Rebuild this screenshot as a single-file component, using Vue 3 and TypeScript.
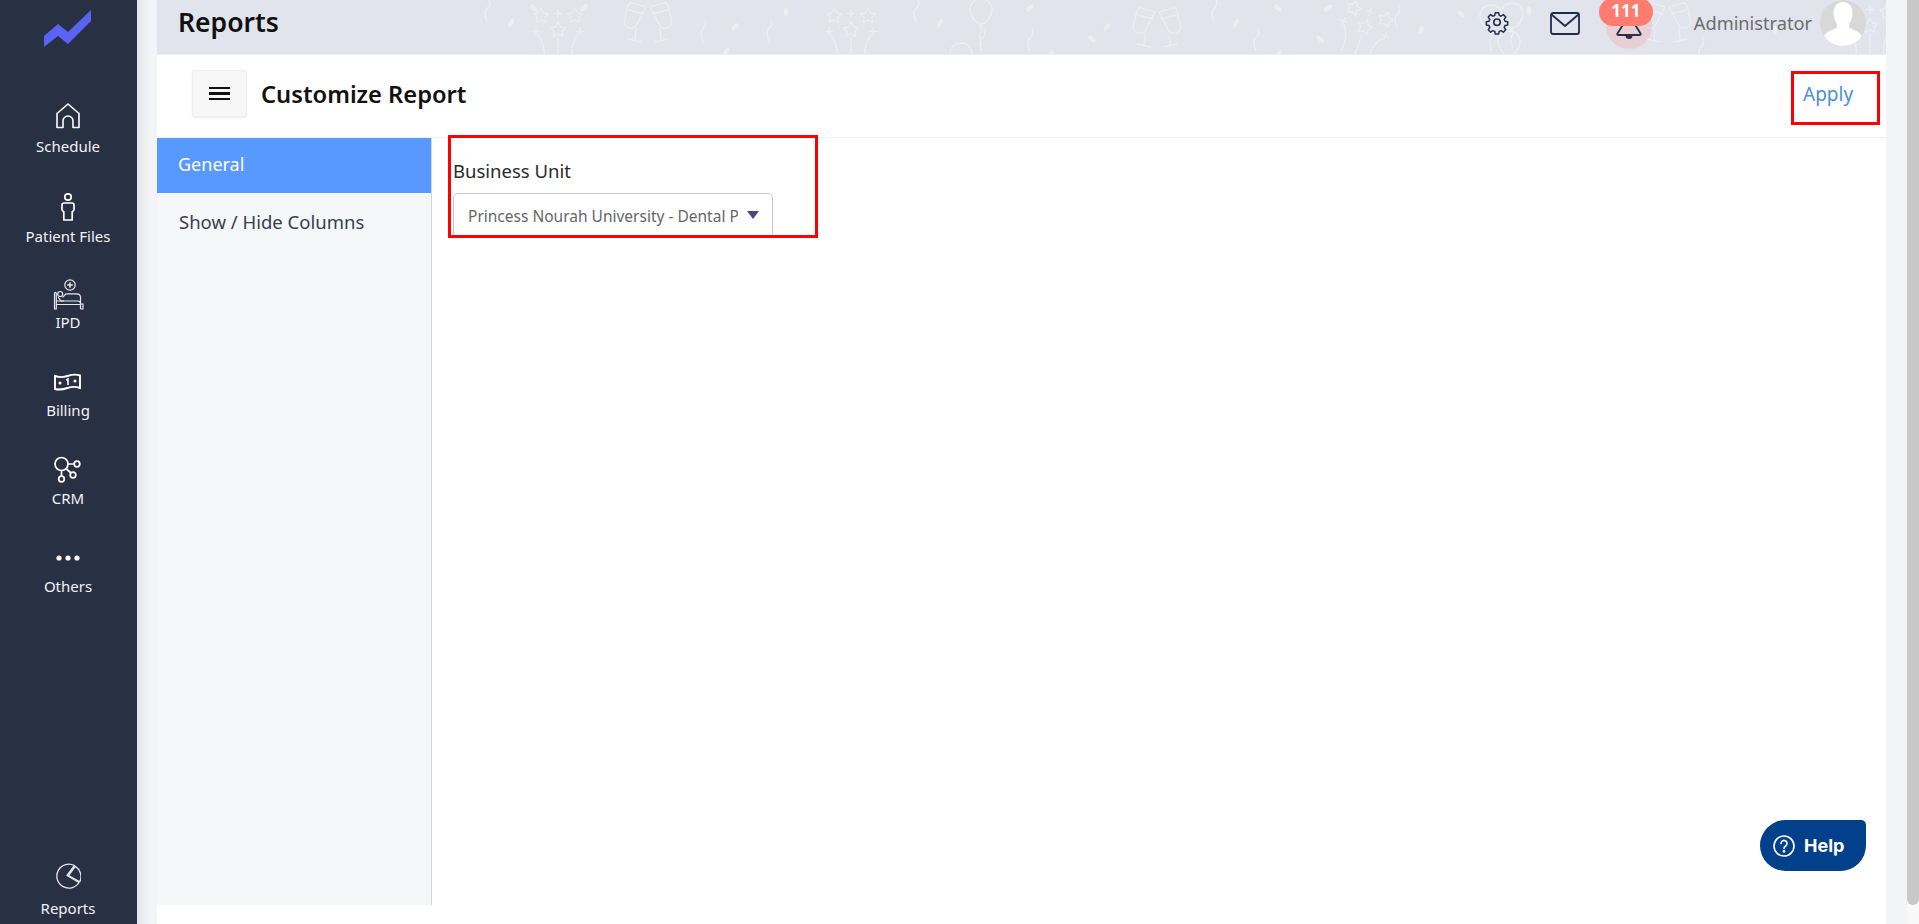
<script setup lang="ts">
const leaves: [number, number, number][] = [
  [534, 8, -45], [584, 8, 45], [511, 23, 30], [735, 27, 45], [726, 52, 30], [786, 12, 0], [940, 23, 25],
  [1030, 8, 50], [1107, 27, 45], [1092, 39, -45], [1051, 54, 20], [1236, 23, 25], [1278, 8, -45],
  [1320, 39, -50], [1328, 8, 50], [1279, 54, 25], [1421, 30, 20], [1461, 14, -45], [1529, 11, 0], [1640, 14, 40], [1775, 30, 0]
]
const squiggles: [number, number][] = [[486, 0], [702, 20], [768, 20], [915, 0], [1029, 29], [1213, 0], [1255, 29], [1396, 6], [981, 30], [1700, 38]]
const glasses: [number, number][] = [[648, 27], [1157, 32], [1667, 27]]
const stars: [number, number, number][] = [[558, 32, 0], [851, 32, 0], [1364, 29, 20], [1870, 28, 0]]
const balloons: [number, number][] = [[981, 12], [961, 56], [1491, 18], [1509, 44], [1512, 16]]
</script>

<template>
  <div class="page">
    <aside class="sidebar">
      <svg class="logo" width="47" height="37" viewBox="44 10 47 37"><polygon points="44,36 58,24 68,32 91,10 91,21 68,44 58,36 44,47" fill="#5b62f5" /></svg>
      <nav class="nav">
        <a class="item schedule">
          <svg width="24" height="26" viewBox="0 0 24 26" fill="none" stroke="#fff" stroke-width="1.6" stroke-linejoin="round"><path d="M1 24.5V10.5L12 1l11 9.500V24.500h-6V18a5 5 0 0 0-10 0v6.500z" /></svg>
          <span>Schedule</span>
        </a>
        <a class="item patient">
          <svg width="14" height="28" viewBox="0 0 14 28" fill="none" stroke="#fff" stroke-width="1.700"><circle cx="7" cy="4" r="3.200" /><path d="M3 10h8c1.300 0 2 .8 2 2v4.500c0 1-.5 1.500-1.800 2.200V27H2.800v-8.300C1.500 18 1 17.500 1 16.500V12c0-1.200.7-2 2-2z" /></svg>
          <span>Patient Files</span>
        </a>
        <a class="item ipd">
          <svg width="31" height="31" viewBox="0 0 31 31" fill="none" stroke="#e8e9ec" stroke-width="1.200"><circle cx="17" cy="6" r="5.200" /><path d="M17 3.200v5.600M14.200 6h5.600" stroke-width="1.500" /><path d="M1.500 30V14.500c0-1.500 1.800-1.500 1.800 0V30zM3.500 22h21c1.500 0 3 1 3 2.500V30M3.500 25.500h24M27.500 24V18.500c0-2.500-1.500-3.700-4-3.700H13l-3.500 3.500" /><circle cx="7.200" cy="15" r="2.500" /><path d="M5 18l3 4h3" /><path d="M27.500 30h2.500v-5h-2.500" /></svg>
          <span>IPD</span>
        </a>
        <a class="item billing">
          <svg width="27" height="18" viewBox="0 0 27 18" fill="none" stroke="#fff" stroke-width="1.900"><path d="M1 3c5 1.800 8 1.500 12.500 0S22 1 26 2.500V15c-5-1.800-8-1.500-12.500 0S5 17 1 16z" /><path d="M12 7l2-1v6" stroke-width="1.600" /><circle cx="6" cy="10" r=".6" /><circle cx="21" cy="8" r=".6" /></svg>
          <span>Billing</span>
        </a>
        <a class="item crm">
          <svg width="27" height="27" viewBox="0 0 27 27" fill="none" stroke="#fff" stroke-width="1.700"><circle cx="7.500" cy="8" r="6.500" /><circle cx="23" cy="8" r="2.800" /><circle cx="19" cy="19" r="2.800" /><circle cx="7.500" cy="23" r="2.800" /><path d="M14 8h6M12.500 13l4.500 4M7.500 14.500V20" /></svg>
          <span>CRM</span>
        </a>
        <a class="item others">
          <svg width="24" height="6" viewBox="0 0 24 6" fill="#fff"><circle cx="3" cy="3" r="2.600" /><circle cx="12" cy="3" r="2.600" /><circle cx="21" cy="3" r="2.600" /></svg>
          <span>Others</span>
        </a>
        <a class="item reports">
          <svg width="26" height="26" viewBox="0 0 26 26" fill="none" stroke="#e8e9ec" stroke-width="1.300" stroke-linejoin="round"><path d="M19.500 2.500A12 12 0 1 0 24 19.500L12 12.500z" /><path d="M20.300 3.400a12 12 0 0 1 4.500 15.300L13.500 12.500z" /></svg>
          <span>Reports</span>
        </a>
      </nav>
    </aside>

    <div class="gutter-left"></div>

    <main class="main">
      <header class="topbar">
        <svg class="confetti" width="1729" height="54" viewBox="157 0 1729 54" fill="none" stroke="#eceef4" stroke-width="1.300" stroke-linecap="round" stroke-linejoin="round">
          <defs>
            <g id="glass-pair">
              <path d="M-2-20l-14-4c-3-.5-3.500 1-4 3l-3.500 14c-1 5 1.500 7 5 8 4 1 6.500-.5 8-5z" />
              <path d="M2-20l14-4c3-.5 3.500 1 4 3l3.500 14c1 5-1.500 7-5 8-4 1-6.500-.5-8-5z" />
              <path d="M-19-17l15 4M19-17l-15 4M-12 2l-1 11M12 2l1 11M-20 12l13 3M20 12l-13 3" />
            </g>
            <g id="star-burst">
              <path id="one-star" d="M-17-24l2.500 5 5 .8-3.600 3.500 .8 5-4.700-2.400-4.700 2.400 .8-5-3.600-3.500 5-.8z" />
              <use href="#one-star" x="34" />
              <use href="#one-star" x="17" y="14" />
              <path d="M0-22v7M-3.500-18.500h7M-22-4v7M-25.500-.5h7M22-4v7M18.500-.5h7M-20 3c6 8 7 15 6 24M20 3c-6 8-7 15-6 24M0 6v20" />
            </g>
            <path id="squiggle" d="M3 0c2 4 0 7-2.500 9C-2 12 -1 16 1 22" />
            <path id="balloon" d="M0-13c7 0 11 5 11 11S5 12 0 12-11 4-11-2s4-11 11-11zM0 12l-1 3 2 0zM0 15c3 4-3 7-1 11 1 3 2 5 1 8" />
          </defs>
          <ellipse v-for="(l, i) in leaves" :key="'l' + i" :cx="l[0]" :cy="l[1]" rx="2.200" ry="4.500" :transform="`rotate(${l[2]} ${l[0]} ${l[1]})`" fill="#eceef4" stroke="none" />
          <use v-for="(s, i) in squiggles" :key="'s' + i" href="#squiggle" :x="s[0]" :y="s[1]" />
          <use v-for="(g, i) in glasses" :key="'g' + i" href="#glass-pair" :x="g[0]" :y="g[1]" />
          <g v-for="(s, i) in stars" :key="'t' + i" :transform="`translate(${s[0]} ${s[1]}) rotate(${s[2]})`"><use href="#star-burst" /></g>
          <use v-for="(b, i) in balloons" :key="'b' + i" href="#balloon" :x="b[0]" :y="b[1]" />
        </svg>
        <h1 class="page-title">Reports</h1>
        <div class="top-actions">
          <svg class="gear" width="26" height="26" viewBox="0 0 24 24" fill="none" stroke="#27304a" stroke-width="1.500" stroke-linejoin="round"><path d="M10.300 2.500h3.400l.5 2.700 1.900.8 2.300-1.600 2.400 2.400-1.600 2.300.8 1.900 2.700.5v3.400l-2.700.5-.8 1.900 1.600 2.300-2.400 2.400-2.300-1.600-1.900.8-.5 2.700h-3.400l-.5-2.700-1.900-.8-2.300 1.600-2.400-2.400 1.600-2.300-.8-1.900-2.700-.5v-3.400l2.700-.5.8-1.900-1.600-2.300 2.400-2.400 2.300 1.600 1.900-.8z" transform="translate(12 12) scale(.92) translate(-12 -12.800)" /><circle cx="12" cy="11.300" r="3" /></svg>
          <svg class="mail" width="30" height="23" viewBox="0 0 30 23" fill="none" stroke="#1f2d4d" stroke-width="1.800" stroke-linejoin="round"><rect x="1" y="1" width="28" height="21" rx="2" /><path d="M1.500 2.500L15 14 28.500 2.500" /></svg>
          <div class="bell">
            <svg class="bell-icon" width="26" height="18" viewBox="0 0 26 18"><path d="M8 0L1.500 10.500c-.5 1 0 1.500 1 1.500h21c1 0 1.500-.5 1-1.500L18 0" fill="none" stroke="#2c2f4c" stroke-width="1.800" /><path d="M9.500 12.500a3.500 3.500 0 0 0 7 0z" fill="#2c2f4c" /></svg>
            <span class="badge">111</span>
          </div>
          <span class="user">Administrator</span>
          <div class="avatar">
            <svg width="46" height="46" viewBox="0 0 46 46"><path fill="#fff" d="M23 2c6.500 0 9.500 5 9.500 11 0 4-1.200 7.500-3 10-.8 1.500-.8 4 .8 5.200 3 1.800 9 3.300 11 6.800 1 2 1 5 .7 11H4c-.3-6-.3-9 .7-11 2-3.500 8-5 11-6.800 1.600-1.200 1.600-3.700.8-5.200-1.800-2.500-3-6-3-10 0-6 3-11 9.500-11z" /></svg>
          </div>
        </div>
      </header>

      <section class="toolbar">
        <button class="menu-btn" type="button" aria-label="menu"><span></span><span></span><span></span></button>
        <h2 class="sub-title">Customize Report</h2>
        <div class="apply-box"><a class="apply">Apply</a></div>
      </section>

      <section class="content">
        <aside class="tabs">
          <a class="tab active">General</a>
          <a class="tab columns">Show / Hide Columns</a>
        </aside>
        <div class="form">
          <label class="field-label">Business Unit</label>
          <div class="select">
            <span class="select-text">Princess Nourah University - Dental Polyclinic</span>
            <i class="caret"></i>
          </div>
          <div class="highlight"></div>
        </div>
      </section>

      <button class="help" type="button">
        <svg width="22" height="22" viewBox="0 0 22 22" fill="none" stroke="#fff" stroke-width="1.600"><circle cx="11" cy="11" r="10" /><path d="M8 8.500a3 3 0 1 1 4.600 2.500c-1 .7-1.600 1.200-1.600 2.500" stroke-linecap="round" /><circle cx="11" cy="16.300" r=".6" fill="#fff" /></svg>
        <span>Help</span>
      </button>
    </main>

    <div class="gutter-right"></div>
    <div class="scrollbar"><div class="thumb"></div></div>
  </div>
</template>

<style scoped>
.page { display: flex; height: 924px; overflow: hidden; background: #fff; font-family: "Noto Sans", "Open Sans", sans-serif; }
.sidebar { width: 137px; flex: none; background: #283044; display: flex; flex-direction: column; }
.logo { display: block; margin: 10px 0 0 44px; flex: none; }
.nav { flex: 1; display: flex; flex-direction: column; align-items: center; padding-right: 1px; color: #f2f3f5; font-size: 15px; line-height: 20px; }
.item { display: flex; flex-direction: column; align-items: center; }
.item svg { display: block; }
.item span { margin: -1px 0 1px; }
.schedule { margin-top: 56px; }
.schedule svg { margin-bottom: 8px; }
.patient { margin-top: 36px; }
.patient svg { margin-bottom: 6px; }
.ipd { margin-top: 32px; }
.ipd svg { margin-bottom: 3px; }
.billing { margin-top: 40px; }
.billing svg { margin-bottom: 10px; }
.crm { margin-top: 35px; }
.crm svg { margin-bottom: 6px; }
.others { margin-top: 46px; }
.others svg { margin-bottom: 16px; }
.reports { margin-top: auto; margin-bottom: 5px; }
.reports svg { margin-bottom: 10px; }
.gutter-left { width: 20px; flex: none; background: linear-gradient(90deg, #e4e5e9, #f3f4f7 65%); }
.main { width: 1729px; flex: none; position: relative; display: flex; flex-direction: column; }
.topbar { height: 54px; flex: none; position: relative; background: #e1e4ed; display: flex; align-items: center; padding-left: 21px; border-bottom: 1px solid #eceef3; overflow: hidden; }
.confetti { position: absolute; left: 0; top: 0; }
.page-title { position: relative; margin: 0 0 10px; font-size: 26.500px; font-weight: 600; color: #111; line-height: 46px; }
.top-actions { position: relative; margin-left: auto; display: flex; align-items: center; height: 54px; }
.gear { margin-right: 40px; margin-bottom: 9px; }
.mail { margin-right: 26px; margin-bottom: 8px; }
.bell { position: relative; width: 46px; height: 46px; border-radius: 50%; background: rgba(255, 124, 110, .2); align-self: flex-start; margin-top: 3px; margin-right: 42px; }
.bell-icon { position: absolute; left: 10px; top: 20px; }
.badge { position: absolute; left: -7px; top: -5px; width: 54px; height: 28px; border-radius: 14px; background: #ff7c6e; color: #fff; font-weight: 700; font-size: 17px; line-height: 26px; text-align: center; }
.user { font-size: 18.200px; color: #6c6c6c; margin-right: 8px; margin-bottom: 9px; }
.avatar { width: 46px; height: 46px; border-radius: 50%; background: #d8d8d8; overflow: hidden; align-self: flex-start; margin-right: 20px; }
.avatar svg { display: block; }
.toolbar { height: 83px; flex: none; display: flex; align-items: center; padding-left: 35px; border-bottom: 1px solid #eee; background: #fff; box-sizing: border-box; }
.menu-btn { width: 55px; height: 47px; margin: 0 14px 5px 0; padding: 0; background: #f7f7f7; border: 1px solid #eee; border-radius: 3px; box-shadow: 0 1px 2px rgba(0, 0, 0, .08); display: flex; flex-direction: column; align-items: center; justify-content: center; gap: 3px; }
.menu-btn span { width: 21px; height: 2.500px; background: #111; }
.sub-title { margin: 0 0 5px; font-size: 23.700px; font-weight: 600; color: #111; }
.apply-box { margin-left: auto; margin-right: 6px; margin-top: 4px; width: 89px; height: 54px; box-sizing: border-box; border: 3px solid #f00; padding: 6px 0 0 9px; }
.apply { font-size: 19px; color: #4a90d6; line-height: 28px; }
.content { height: 767px; flex: none; display: flex; }
.tabs { width: 275px; flex: none; box-sizing: border-box; background: #f6f7f9; border-right: 1px solid #d3d5d9; }
.tab { display: block; height: 55px; line-height: 52px; padding-left: 21px; font-size: 18px; color: #39404a; }
.tab.columns { font-size: 18.500px; padding: 2px 0 0 22px; line-height: 54px; }
.tab.active { background: #5899ff; color: #fff; width: 274px; box-sizing: border-box; }
.form { position: relative; flex: 1; padding: 20px 0 0 21px; }
.field-label { display: block; font-size: 18.500px; line-height: 26px; color: #2b2b2b; }
.select { margin-top: 9px; width: 320px; height: 42px; box-sizing: border-box; border: 1px solid #c9c9c9; border-radius: 5px 5px 0 0; border-bottom: 0; position: relative; padding: 11px 0 0 14px; font-size: 15.500px; line-height: 22px; color: #666; }
.select-text { display: block; width: 270px; overflow: hidden; white-space: nowrap; }
.caret { position: absolute; left: 293px; top: 17px; width: 0; height: 0; border-left: 6px solid transparent; border-right: 6px solid transparent; border-top: 8px solid #454a7a; }
.highlight { position: absolute; left: 16px; top: -3px; width: 370px; height: 103px; box-sizing: border-box; border: 3px solid #f00; pointer-events: none; }
.help { position: absolute; left: 1603px; top: 820px; width: 106px; height: 51px; border: 0; padding: 0 0 0 13px; background: #03408c; border-radius: 26px 5px 26px 26px; color: #fff; display: flex; align-items: center; gap: 9px; font-family: "Inter", sans-serif; font-size: 18px; font-weight: 700; }
.help svg { flex: none; }
.gutter-right { width: 21px; flex: none; background: #f3f4f7; }
.scrollbar { width: 12px; flex: none; background: #f8f8f8; }
.thumb { height: 905px; background: #c8c8c8; border-radius: 0 0 6px 6px; }
</style>
